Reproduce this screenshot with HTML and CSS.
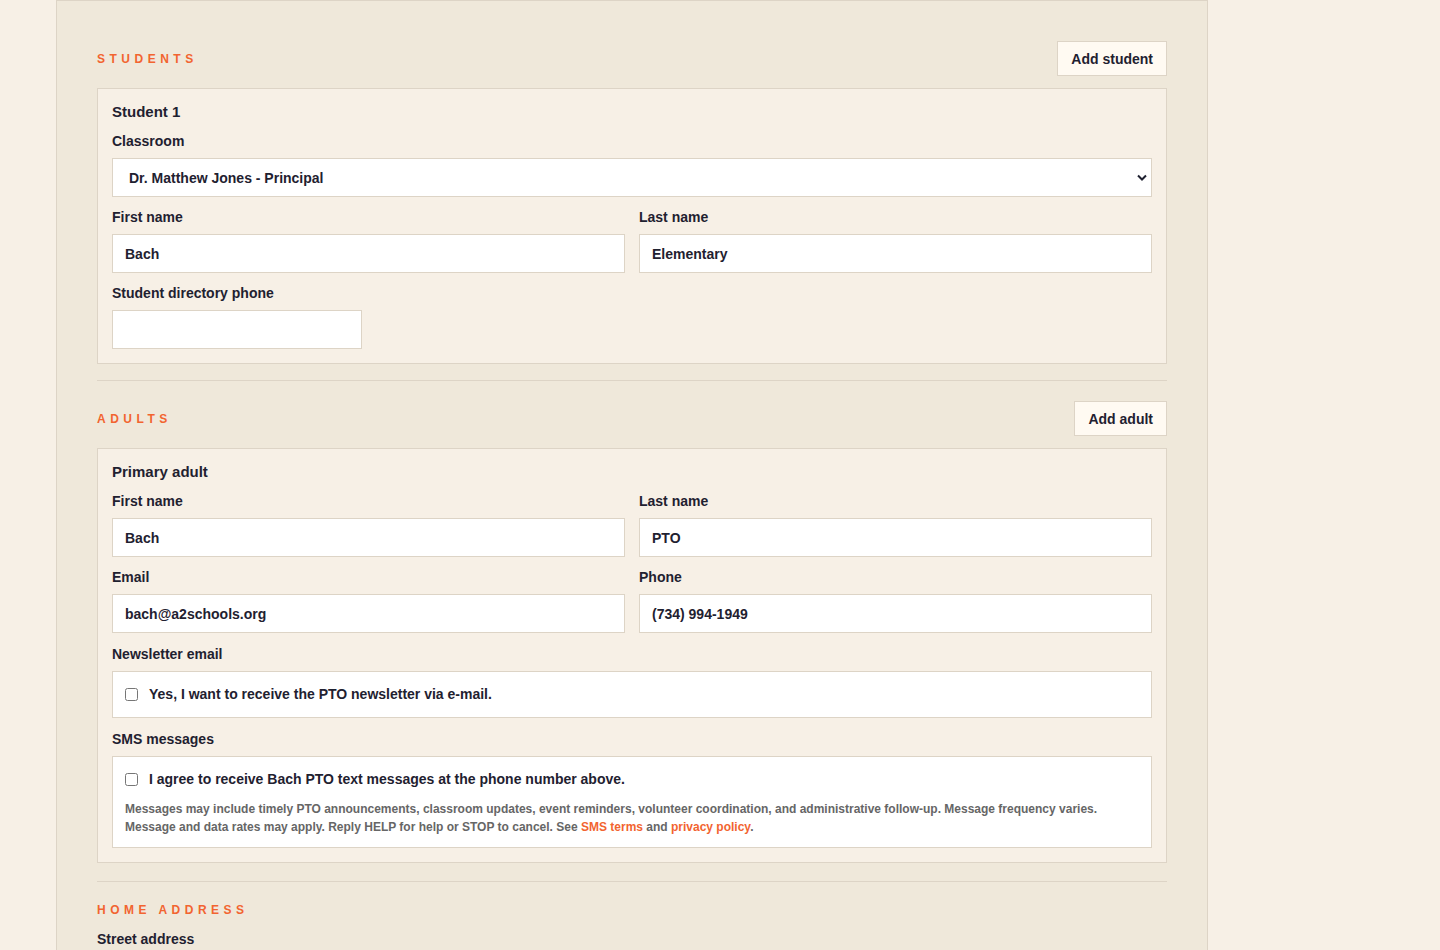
FILE: index.html
```html
<!DOCTYPE html>
<html lang="en">
<head>
  <meta charset="UTF-8" />
  <meta name="viewport" content="width=device-width, initial-scale=1.0"/>
  <title>Bach PTO Registration</title>
  <link rel="stylesheet" href="styles.css">
</head>
<body>
  <div class="page">
    <form class="panel">

      <section class="section">
        <div class="section-head">
          <h2>Students</h2>
          <button type="button" class="add-btn">Add student</button>
        </div>
        <div class="card">
          <div class="card-title">Student 1</div>
          <div class="field">
            <label for="classroom">Classroom</label>
            <div class="select-wrap">
              <select id="classroom">
                <option>Dr. Matthew Jones - Principal</option>
              </select>
              <svg class="chevron" width="10" height="7" viewBox="0 0 10 7"><path d="M1 1.5l4 4 4-4" fill="none" stroke="#1f2130" stroke-width="2"/></svg>
            </div>
          </div>
          <div class="row">
            <div class="field">
              <label for="sFirst">First name</label>
              <input type="text" id="sFirst" value="Bach" />
            </div>
            <div class="field">
              <label for="sLast">Last name</label>
              <input type="text" id="sLast" value="Elementary" />
            </div>
          </div>
          <div class="field">
            <label for="sPhone">Student directory phone</label>
            <input type="text" id="sPhone" class="short" />
          </div>
        </div>
      </section>

      <section class="section adults">
        <div class="section-head">
          <h2>Adults</h2>
          <button type="button" class="add-btn">Add adult</button>
        </div>
        <div class="card">
          <div class="card-title">Primary adult</div>
          <div class="row">
            <div class="field">
              <label for="aFirst">First name</label>
              <input type="text" id="aFirst" value="Bach" />
            </div>
            <div class="field">
              <label for="aLast">Last name</label>
              <input type="text" id="aLast" value="PTO" />
            </div>
          </div>
          <div class="row">
            <div class="field">
              <label for="aEmail">Email</label>
              <input type="text" id="aEmail" value="bach@a2schools.org" />
            </div>
            <div class="field">
              <label for="aPhone">Phone</label>
              <input type="text" id="aPhone" value="(734) 994-1949" />
            </div>
          </div>
          <div class="field opt">
            <span class="label">Newsletter email</span>
            <div class="check-box">
              <label class="check"><input type="checkbox" /> Yes, I want to receive the PTO newsletter via e-mail.</label>
            </div>
          </div>
          <div class="field opt">
            <span class="label">SMS messages</span>
            <div class="check-box sms">
              <label class="check"><input type="checkbox" /> I agree to receive Bach PTO text messages at the phone number above.</label>
              <p class="fine">Messages may include timely PTO announcements, classroom updates, event reminders, volunteer coordination, and administrative follow-up. Message frequency varies.<br>Message and data rates may apply. Reply HELP for help or STOP to cancel. See <a href="#">SMS terms</a> and <a href="#">privacy policy</a>.</p>
            </div>
          </div>
        </div>
      </section>

      <section class="section">
        <h2 class="plain">Home address</h2>
        <div class="field">
          <label for="street">Street address</label>
          <input type="text" id="street" />
        </div>
      </section>

    </form>
  </div>
</body>
</html>
```

FILE: styles.css
```css
body {
  margin: 0;
  background: #f7f0e6;
  font-family: "Liberation Sans", Arial, sans-serif;
  color: #1f2130;
}
.page {
  padding-left: 56px;
}
.panel {
  width: 1070px;
  background: #efe8da;
  border: 1px solid #ddd4c6;
  padding: 40px;
}
.section {
  padding-bottom: 16px;
  border-bottom: 1px solid #ddd4c6;
  margin-bottom: 20px;
}
.section.adults {
  padding-bottom: 18px;
}
.section:last-child {
  border-bottom: none;
}
.section-head {
  display: flex;
  justify-content: space-between;
  align-items: center;
  margin-bottom: 12px;
}
h2 {
  margin: 0;
  font-size: 12px;
  line-height: 16px;
  font-weight: bold;
  text-transform: uppercase;
  letter-spacing: 4.5px;
  color: #f26430;
}
h2.plain {
  margin-bottom: 13px;
}
.add-btn {
  height: 35px;
  padding: 0 13px;
  background: #fffaf2;
  border: 1px solid #ddd4c6;
  border-radius: 0;
  font-family: inherit;
  font-size: 14px;
  font-weight: bold;
  color: #1f2130;
  cursor: pointer;
}
.card {
  display: grid;
  gap: 12px;
  background: #f7f0e6;
  border: 1px solid #ddd4c6;
  padding: 14px;
}
.card-title {
  font-size: 15px;
  font-weight: bold;
  line-height: 18px;
}
.row {
  display: grid;
  grid-template-columns: 1fr 1fr;
  gap: 14px;
}
.section > .field {
  margin-bottom: 12px;
}
.field.opt {
  margin-top: 1px;
}
.field label,
.field .label {
  display: block;
  font-size: 14px;
  font-weight: bold;
  line-height: 17px;
  margin-bottom: 8px;
}
input[type="text"],
select {
  display: block;
  box-sizing: border-box;
  width: 100%;
  height: 39px;
  margin: 0;
  padding: 0 12px;
  background: #fff;
  border: 1px solid #ddd4c6;
  border-radius: 0;
  font-family: inherit;
  font-size: 14px;
  font-weight: bold;
  color: #1f2130;
  outline: none;
}
input.short {
  width: 250px;
}
.select-wrap {
  position: relative;
}
select {
  appearance: none;
  padding-left: 16px;
}
.chevron {
  position: absolute;
  right: 5px;
  top: 16px;
  pointer-events: none;
}
.check-box {
  background: #fff;
  border: 1px solid #ddd4c6;
  padding: 14px 12px;
}
.check-box.sms {
  padding-bottom: 11px;
}
.field .check {
  display: flex;
  align-items: center;
  gap: 11px;
  margin: 0;
  font-size: 14px;
  line-height: 17px;
}
.check input {
  margin: 0;
  width: 13px;
  height: 13px;
}
.fine {
  margin: 12px 0 0;
  font-size: 12px;
  line-height: 18px;
  font-weight: bold;
  color: #666;
}
.fine a {
  color: #f26430;
  text-decoration: none;
}
```
